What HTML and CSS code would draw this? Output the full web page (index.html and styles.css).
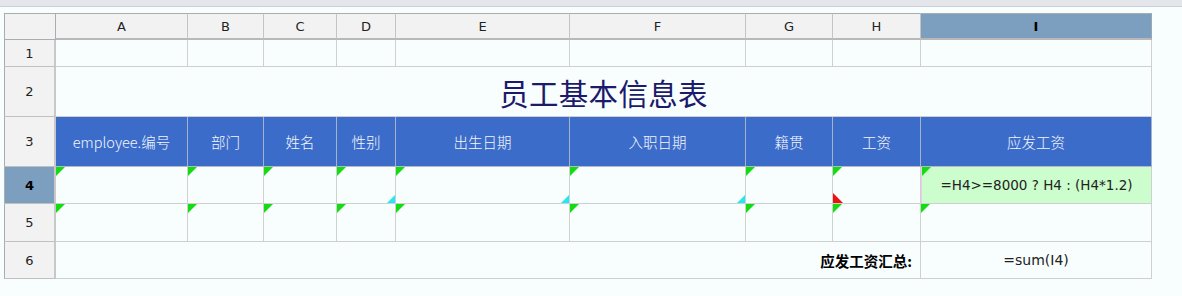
FILE: index.html
```html
<!DOCTYPE html>
<html lang="zh">
<head>
<meta charset="utf-8">
<title>员工基本信息表</title>
<link rel="stylesheet" href="styles.css">
</head>
<body>
<div class="toolbar"></div>
<div class="sheet">
  <div class="corner"></div>
  <div class="colhead">A</div>
  <div class="colhead">B</div>
  <div class="colhead">C</div>
  <div class="colhead">D</div>
  <div class="colhead">E</div>
  <div class="colhead">F</div>
  <div class="colhead">G</div>
  <div class="colhead">H</div>
  <div class="colhead sel">I</div>

  <div class="rowhead">1</div>
  <div class="cell"></div><div class="cell"></div><div class="cell"></div><div class="cell"></div><div class="cell"></div><div class="cell"></div><div class="cell"></div><div class="cell"></div><div class="cell"></div>

  <div class="rowhead">2</div>
  <div class="cell title span9">员工基本信息表</div>

  <div class="rowhead">3</div>
  <div class="cell th">employee.编号</div>
  <div class="cell th">部门</div>
  <div class="cell th">姓名</div>
  <div class="cell th">性别</div>
  <div class="cell th">出生日期</div>
  <div class="cell th">入职日期</div>
  <div class="cell th">籍贯</div>
  <div class="cell th">工资</div>
  <div class="cell th">应发工资</div>

  <div class="rowhead sel">4</div>
  <div class="cell mark"></div>
  <div class="cell mark"></div>
  <div class="cell mark"></div>
  <div class="cell mark cyan"></div>
  <div class="cell mark cyan"></div>
  <div class="cell mark cyan"></div>
  <div class="cell mark"></div>
  <div class="cell mark red"></div>
  <div class="cell mark formula">=H4&gt;=8000 ? H4 : (H4*1.2)</div>

  <div class="rowhead">5</div>
  <div class="cell mark"></div>
  <div class="cell mark"></div>
  <div class="cell mark"></div>
  <div class="cell mark"></div>
  <div class="cell mark"></div>
  <div class="cell mark"></div>
  <div class="cell mark"></div>
  <div class="cell mark"></div>
  <div class="cell mark"></div>

  <div class="rowhead">6</div>
  <div class="cell total span8">应发工资汇总:</div>
  <div class="cell sum">=sum(I4)</div>
</div>
</body>
</html>
```

FILE: styles.css
```css
html, body {
  margin: 0;
  padding: 0;
}
body {
  background: #f8fdfe;
  font-family: "DejaVu Sans", "Noto Sans CJK SC", sans-serif;
  width: 1182px;
  height: 296px;
  overflow: hidden;
}
.toolbar {
  height: 6px;
  background: #e4e6eb;
  border-bottom: 1px solid #cdd0d6;
}
.sheet {
  display: grid;
  grid-template-columns: 52px 132px 76px 73px 59px 174px 176px 87px 88px 231px;
  grid-template-rows: 27px 27px 50px 50px 37px 38px 37px;
  margin: 6px 0 0 4px;
  width: 1148px;
}
.sheet > div {
  box-sizing: border-box;
  position: relative;
}
.corner {
  background: #f2f2f2;
  border: 1px solid #a9adb0;
}
.colhead {
  background: #f2f2f2;
  border-top: 1px solid #a9adb0;
  border-right: 1px solid #c4c4c4;
  border-bottom: 2px solid #b8b8b8;
  font-size: 13px;
  color: #222;
  display: flex;
  align-items: center;
  justify-content: center;
}
.colhead.sel {
  background: #7c9fc0;
  border-right-color: #9aa8b6;
  font-weight: bold;
  color: #000;
}
.rowhead {
  background: #f2f2f2;
  border-left: 1px solid #a9adb0;
  border-right: 2px solid #c8c8c8;
  border-bottom: 1px solid #c0c0c0;
  font-size: 13px;
  color: #222;
  display: flex;
  align-items: center;
  justify-content: center;
}
.rowhead.sel {
  background: #7c9fc0;
  font-weight: bold;
  color: #000;
}
.cell {
  background: #f8fdfe;
  border-right: 1px solid #d0d0d0;
  border-bottom: 1px solid #cfcfcf;
  display: flex;
  align-items: center;
  justify-content: center;
  font-family: "Noto Sans CJK SC", "DejaVu Sans", sans-serif;
  font-size: 13px;
  color: #111;
}
.span9 { grid-column: span 9; }
.span8 { grid-column: span 8; }
.title {
  font-size: 29.5px;
  color: #1b1a6b;
  letter-spacing: 0.3px;
}
.th {
  background: #3c6cc9;
  color: #f4f7ff;
  border-right-color: #a7b2c6;
  border-bottom-color: #b3b9c6;
  font-size: 14.5px;
  font-weight: 300;
}
.mark::before {
  content: "";
  position: absolute;
  left: 0;
  top: 0;
  width: 9px;
  height: 9px;
  background: #11dd11;
  clip-path: polygon(0 0, 100% 0, 0 100%);
}
.cyan::after {
  content: "";
  position: absolute;
  right: 0;
  bottom: 0;
  width: 8px;
  height: 8px;
  background: #22e8f2;
  clip-path: polygon(100% 0, 100% 100%, 0 100%);
}
.red::after {
  content: "";
  position: absolute;
  left: 0;
  bottom: 0;
  width: 10px;
  height: 10px;
  background: #ee1111;
  clip-path: polygon(0 0, 100% 100%, 0 100%);
}
.formula {
  background: #ccfdcc;
  border-left: 1px solid #f0c8f0;
  font-family: "DejaVu Sans", sans-serif;
  font-size: 13.5px;
  letter-spacing: 0;
  color: #222;
}
.total {
  justify-content: flex-end;
  padding-right: 8px;
  font-size: 14.5px;
  font-weight: bold;
  color: #000;
}
.sum {
  font-family: "DejaVu Sans", sans-serif;
  font-size: 14px;
  color: #222;
}
```
